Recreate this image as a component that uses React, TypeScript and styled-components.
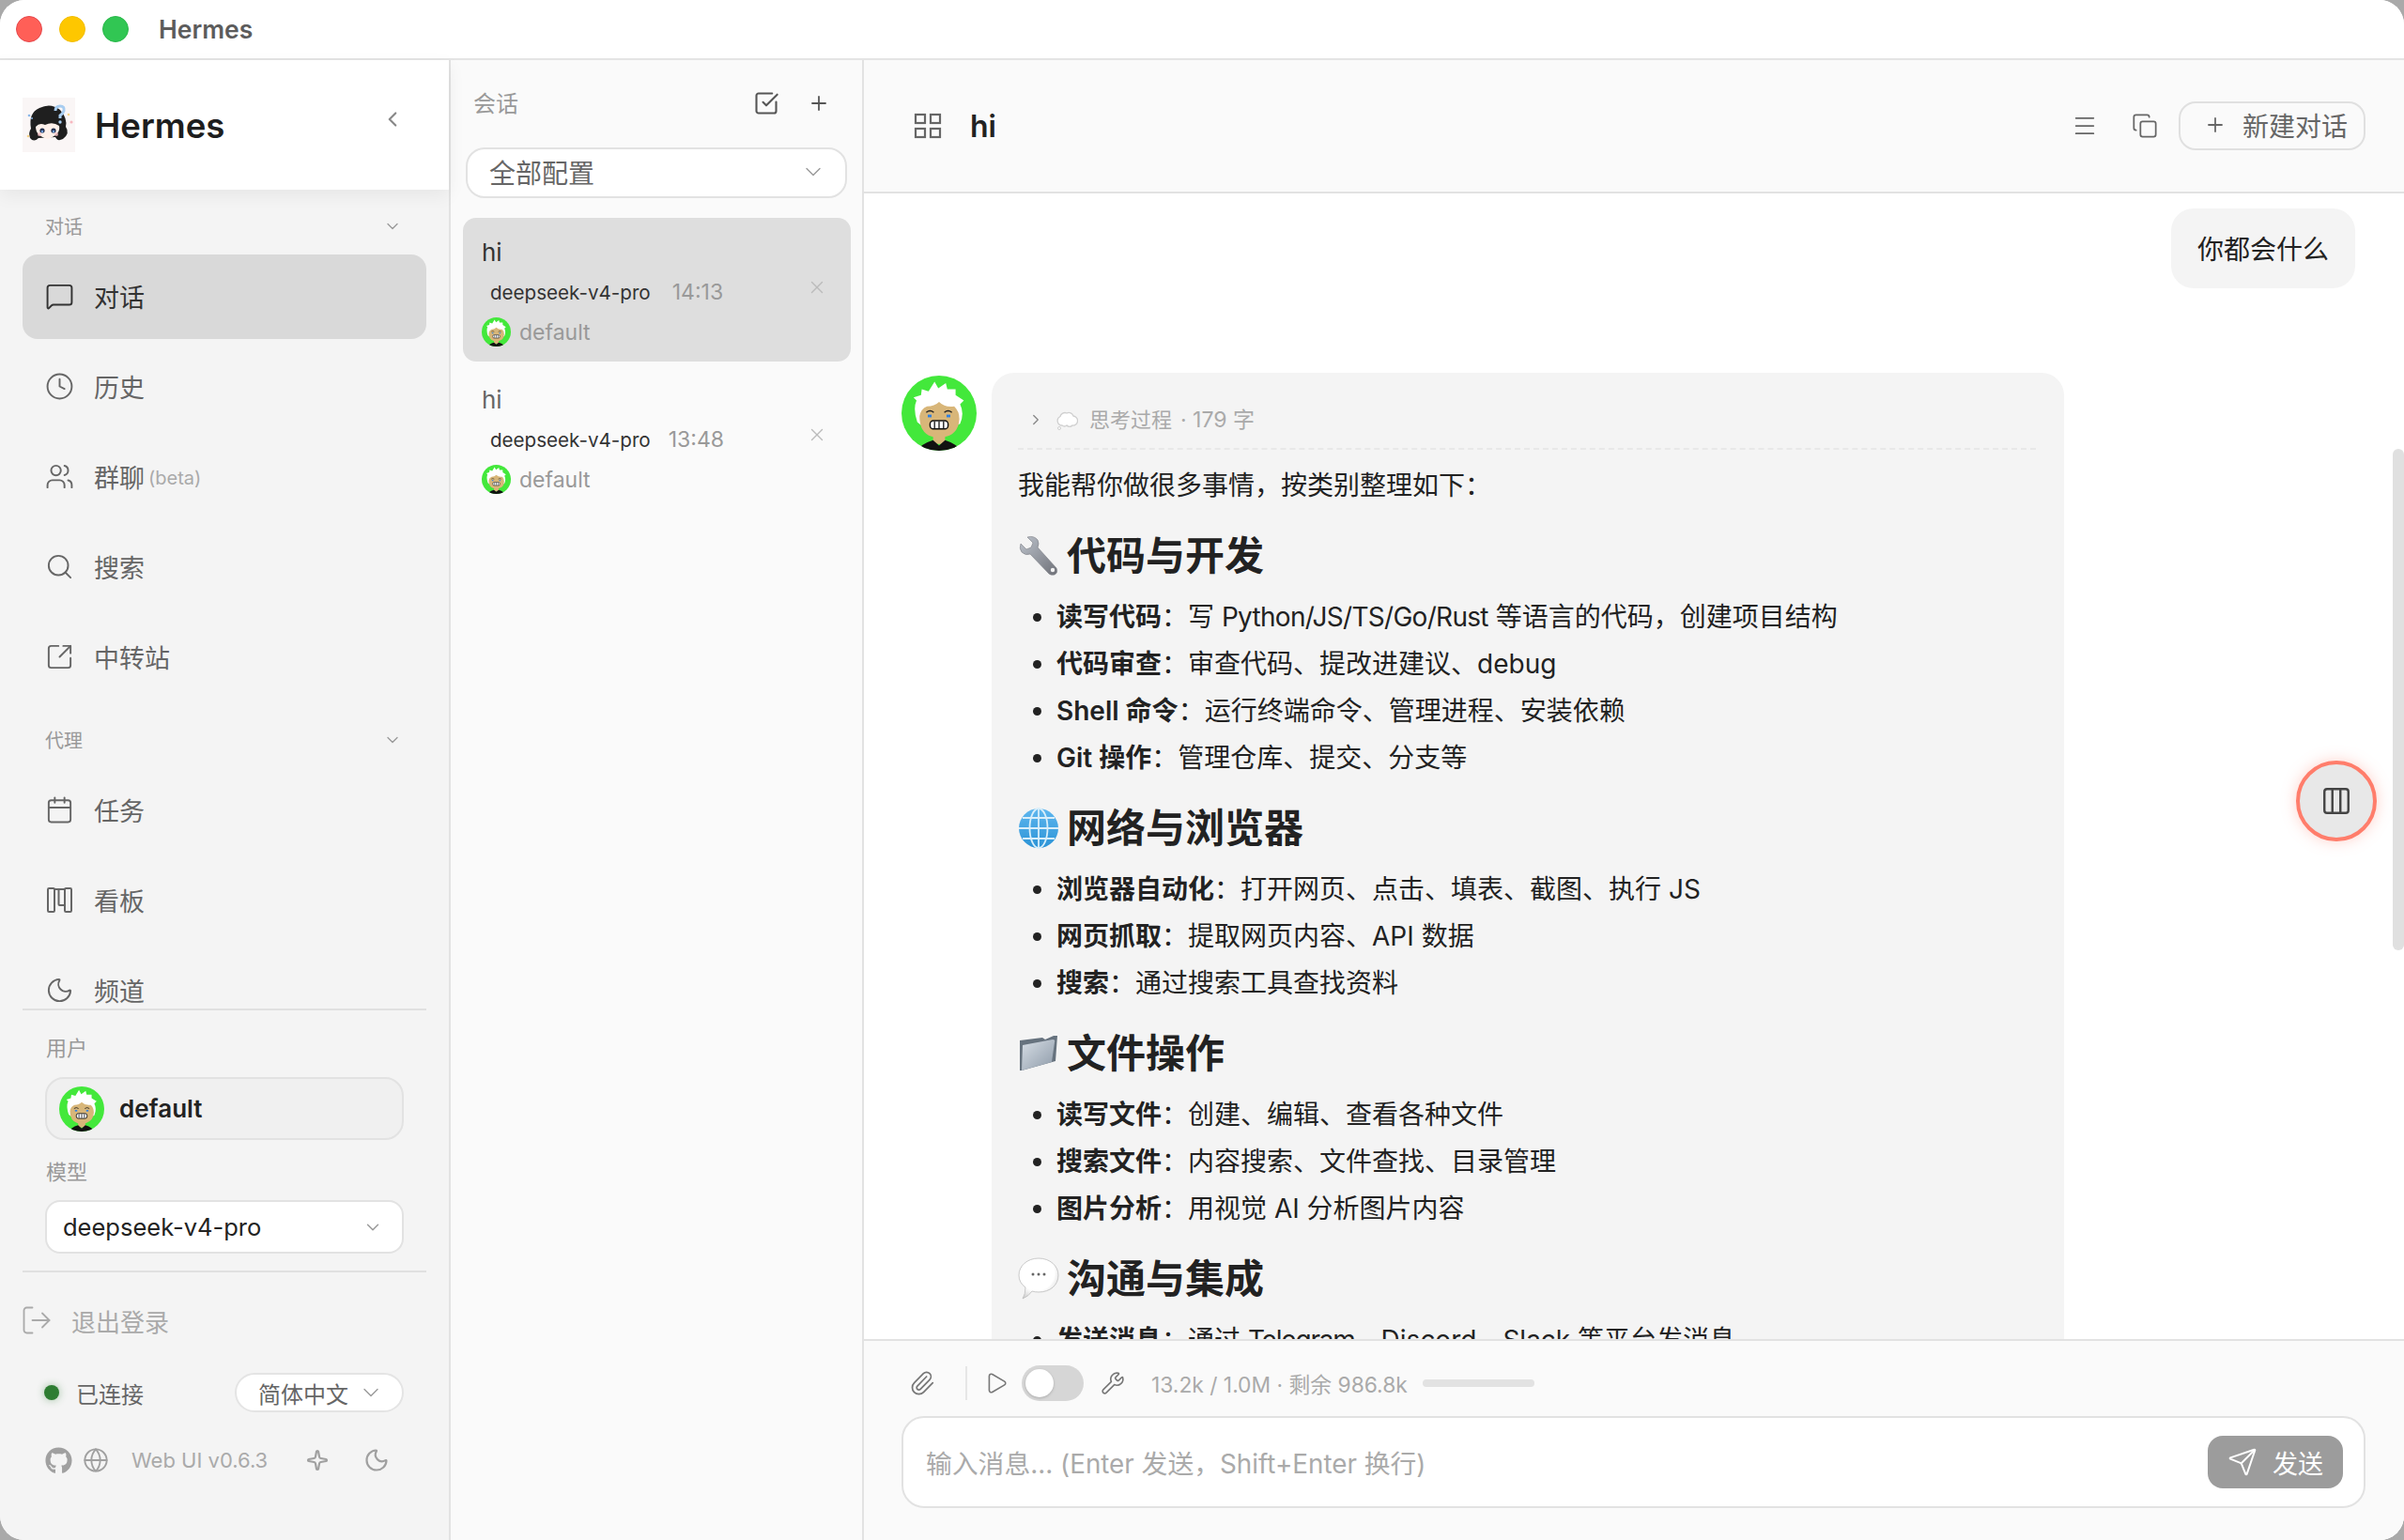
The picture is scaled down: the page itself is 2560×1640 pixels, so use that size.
import React from "react";
import styled, { createGlobalStyle } from "styled-components";
import {
  ChevronDown, ChevronLeft, ChevronRight, Clock, Columns3, Copy, Globe, LogOut, Menu, MessageSquare,
  Moon, Paperclip, Play, Plus, Search, Send, Sparkle, SquareArrowOutUpRight, SquareCheckBig, Users,
  Wrench, X, Calendar,
} from "lucide-react";
import { FaGithub } from "react-icons/fa";

const GlobalStyle = createGlobalStyle`
  html, body { margin: 0; padding: 0; width: 2560px; height: 1640px; overflow: hidden; background: #a9a9a9; }
  * { box-sizing: border-box; }
  body { font-family: Inter, "Noto Sans CJK SC", "Noto Sans", sans-serif; color: #222; }
`;

const AppWindow = styled.div`
  width: 2560px; height: 1640px; border-radius: 26px; overflow: hidden;
  background: #fff; display: flex; flex-direction: column;
`;
const TitleBar = styled.header`
  height: 64px; flex: none; display: flex; align-items: center; padding: 0 0 0 17px;
  background: #fff; border-bottom: 2px solid #e4e4e4;
`;
const Light = styled.span<{ $c: string; $b: string }>`
  width: 28px; height: 28px; border-radius: 50%; margin-right: 18px; background: ${p => p.$c};
  border: 1px solid ${p => p.$b};
`;
const AppTitle = styled.span`
  margin-left: 14px; font-size: 26.500px; font-weight: 600; color: #5c5c5c;
`;
const Body = styled.div`
  flex: 1; display: flex; min-height: 0;
`;

/* sidebar */
const Sidebar = styled.aside`
  width: 480px; flex: none; display: flex; flex-direction: column; background: #f4f4f4;
  border-right: 2px solid #e2e2e2;
`;
const Brand = styled.div`
  height: 138px; flex: none; display: flex; align-items: center; padding: 0 47px 0 24px;
  background: #fff; box-shadow: 0 6px 18px rgba(0,0,0,.06); position: relative; z-index: 1;
`;
const BrandName = styled.span`
  margin-left: 21px; flex: 1; padding-top: 2px; font-size: 36.600px; font-weight: 600; color: #1e1e1e;
`;
const BrandBack = styled.span`
  display: flex; color: #888; margin-top: -12px;
`;
const Nav = styled.nav`
  flex: 1; min-height: 0; overflow: hidden; padding: 26px 24px 0; display: flex; flex-direction: column;
`;
const NavSection = styled.div`
  height: 28px; flex: none; display: flex; align-items: center; justify-content: space-between;
  padding: 0 26px 3px 24px; font-size: 20px; color: #999; margin-bottom: 15px;
`;
const NavItem = styled.div<{ $active?: boolean; $last?: boolean }>`
  height: 90px; flex: none; display: flex; align-items: center; gap: 21px; padding: 0 0 2px 24px;
  border-radius: 16px; font-size: 27px;
  margin-bottom: ${p => (p.$last ? "30px" : "6px")};
  background: ${p => (p.$active ? "#d9d9d9" : "transparent")};
  color: ${p => (p.$active ? "#333" : "#666")};
`;
const Beta = styled.span`
  font-size: 20px; color: #aaa; margin-left: -17px; padding-top: 4px;
`;
const SideFooter = styled.div`
  flex: none; height: 566px; display: flex; flex-direction: column;
`;
const Rule = styled.div<{ $mt?: number }>`
  height: 2px; flex: none; margin: ${p => p.$mt ?? 0}px 24px 0 24px; background: #e0e0e0;
`;
const FieldLabel = styled.div<{ $mt: number }>`
  height: 28px; flex: none; margin: ${p => p.$mt}px 0 0 49px; font-size: 22px; line-height: 28px; color: #999;
`;
const UserBox = styled.div`
  height: 67px; flex: none; margin: 17px 48px 0 48px; display: flex; align-items: center; gap: 16px;
  padding-left: 13px; border: 2px solid #e2e2e2; border-radius: 20px; background: #f0f0f0;
  font-size: 26px; font-weight: 600; color: #222;
`;
const ModelSelect = styled.div`
  height: 57px; flex: none; margin: 16px 48px 0 48px; display: flex; align-items: center;
  justify-content: space-between; padding: 0 20px 0 17px; border: 2px solid #e2e2e2; border-radius: 16px;
  background: #fff; font-size: 25.500px; color: #222;
`;
const Caret = styled.span`
  display: flex; color: #999;
`;
const Logout = styled.div`
  height: 40px; flex: none; margin: 31px 0 0 21px; display: flex; align-items: center; gap: 19px;
  font-size: 26px; color: #aaa;
`;
const StatusRow = styled.div`
  height: 42px; flex: none; margin: 36px 48px 0 47px; display: flex; align-items: center;
  font-size: 24px; color: #666;
`;
const StatusDot = styled.span`
  width: 16px; height: 16px; border-radius: 50%; background: #2e7d32; margin-right: 18px;
  box-shadow: 0 0 8px rgba(46,125,50,.45);
`;
const LangSelect = styled.div`
  margin-left: auto; width: 180px; height: 42px; display: flex; align-items: center; gap: 10px;
  padding-left: 23px; border: 2px solid #e4e4e4; border-radius: 21px; background: #fff; color: #666;
`;
const MetaRow = styled.div`
  height: 40px; flex: none; margin: 31px 48px 0 48px; display: flex; align-items: center; color: #a0a0a0;
`;
const GlobeGap = styled.span`
  display: flex; margin-left: 11px;
`;
const MoonGap = styled.span`
  display: flex; margin-left: 37px;
`;
const Version = styled.span`
  margin-left: 24px; font-size: 22px; color: #aaa; width: 186px;
`;

/* sessions */
const SessionPanel = styled.section`
  width: 440px; flex: none; display: flex; flex-direction: column; background: #fafafa;
  border-right: 2px solid #e2e2e2;
`;
const PanelHead = styled.div`
  height: 92px; flex: none; display: flex; align-items: center; padding: 0 34px 0 24px;
  font-size: 24px; color: #999; gap: 30px;
`;
const PanelTitle = styled.span`
  flex: 1; padding-bottom: 3px;
`;
const HeadIcon = styled.span`
  display: flex; color: #555;
`;
const ProfileSelect = styled.div`
  height: 54px; flex: none; margin: 1px 16px 0 16px; display: flex; align-items: center;
  justify-content: space-between; padding: 0 20px 3px 23px; border: 2px solid #e2e2e2; border-radius: 20px;
  background: #fff; font-size: 28px; color: #666;
`;
const SessionList = styled.div`
  margin: 21px 12px 0 13px; display: flex; flex-direction: column; gap: 4px;
`;
const SessionCard = styled.div<{ $active?: boolean }>`
  height: 153px; padding: 19px 25px 0 20px; border-radius: 14px;
  background: ${p => (p.$active ? "#dedede" : "transparent")};
`;
const SessionTitle = styled.div<{ $active?: boolean }>`
  height: 36px; line-height: 36px; font-size: 26px; color: ${p => (p.$active ? "#333" : "#666")};
`;
const SessionMeta = styled.div`
  height: 36px; margin-top: 6px; padding-left: 9px; display: flex; align-items: center; font-size: 20.600px; color: #333;
`;
const SessionTime = styled.span<{ $gap: number }>`
  margin-left: ${p => p.$gap}px; font-size: 23px; color: #999;
`;
const SessionClose = styled.span`
  display: flex; margin: -10px 0 0 auto; color: #bbb;
`;
const SessionOwner = styled.div`
  height: 31px; margin-top: 9px; display: flex; align-items: center; gap: 9px; font-size: 23px; color: #999;
`;

/* chat */
const Main = styled.main`
  flex: 1; min-width: 0; display: flex; flex-direction: column; position: relative; background: #fff;
`;
const ChatHead = styled.div`
  height: 142px; flex: none; display: flex; align-items: center; padding: 0 41px 0 53px;
  background: #fafafa; border-bottom: 2px solid #e2e2e2;
`;
const ChatTitle = styled.span`
  margin-left: 30px; flex: 1; font-size: 32px; font-weight: 600; color: #222;
`;
const HeadTool = styled.span<{ $mr: number }>`
  display: flex; margin-right: ${p => p.$mr}px; color: #666;
`;
const NewChat = styled.div`
  width: 199px; height: 52px; display: flex; align-items: center; gap: 17px; padding: 0 0 2px 25px;
  border: 2px solid #e0e0e0; border-radius: 18px; font-size: 28px; color: #666;
`;
const Thread = styled.div`
  flex: 1; min-height: 0; overflow: hidden; display: flex; flex-direction: column; padding: 16px 52px 0 40px;
`;
const UserBubble = styled.div`
  align-self: flex-end; flex: none; width: 196px; height: 85px; display: flex; align-items: center; justify-content: center;
  padding-bottom: 2px; background: #f4f4f4; border-radius: 24px; font-size: 28px; color: #222;
`;
const AssistantRow = styled.div`
  flex: none; display: flex; gap: 16px; margin-top: 90px;
`;
const AvatarWrap = styled.div`
  flex: none; margin-top: 3px;
`;
const AssistantBubble = styled.div`
  width: 1142px; flex: none; padding: 29px 30px 40px 28px; background: #f4f4f4; border-radius: 24px;
  font-size: 28px; line-height: 50px; color: #222;
`;
const Thinking = styled.div`
  height: 53px; padding: 0 0 10px 10px; display: flex; align-items: center; gap: 12px; color: #aaa;
  font-size: 22px; border-bottom: 2px dashed #e8e8e8; margin-bottom: 13px;
`;
const ThinkingCount = styled.span`
  margin-left: -3px; font-size: 23px;
`;
const Para = styled.p`
  margin: 0;
`;
const H3 = styled.h3`
  margin: 22px 0 12px; height: 56px; display: flex; align-items: center; gap: 8px;
  font-size: 42px; line-height: 56px; font-weight: 700; color: #222;
`;
const List = styled.ul`
  margin: 0; padding: 0 0 0 41px; list-style: disc;
`;
const Strong = styled.strong`
  font-weight: 600;
`;
const Tight = styled.span<{ $ls: number }>`
  letter-spacing: ${p => p.$ls}px;
`;
const Composer = styled.div`
  height: 214px; flex: none; background: #fafafa; border-top: 2px solid #e2e2e2; padding: 25px 41px 0 40px;
`;
const Toolbar = styled.div`
  height: 40px; display: flex; align-items: center; color: #777;
`;
const ToolIcon = styled.span<{ $ml: number }>`
  display: flex; margin-left: ${p => p.$ml}px; color: #777;
`;
const ToolSep = styled.span`
  width: 2px; height: 36px; margin-left: 32px; background: #e6e6e6;
`;
const Toggle = styled.span`
  width: 66px; height: 38px; margin-left: 14px; padding-left: 4px; border-radius: 19px; background: #d6d6d6;
  display: flex; align-items: center;
`;
const Knob = styled.span`
  width: 30px; height: 30px; border-radius: 50%; background: #fff; box-shadow: 0 1px 3px rgba(0,0,0,.2);
`;
const Usage = styled.span`
  margin-left: 28px; font-size: 22.800px; color: #aaa;
`;
const UsageBar = styled.span`
  width: 119px; height: 8px; margin-left: 16px; border-radius: 4px; background: #e2e2e2;
`;
const InputBox = styled.div`
  margin-top: 15px; height: 98px; display: flex; align-items: center; justify-content: space-between;
  padding: 0 22px 0 24px; background: #fff; border: 2px solid #e2e2e2; border-radius: 24px;
  font-size: 27.800px; color: #aaa;
`;
const SendButton = styled.div`
  width: 144px; height: 56px; display: flex; align-items: center; justify-content: center; gap: 16px;
  border-radius: 16px; background: #9c9c9c; color: #fff; font-size: 27px;
`;
const FloatButton = styled.div`
  position: absolute; top: 746px; right: 29px; width: 86px; height: 86px; border-radius: 50%;
  display: flex; align-items: center; justify-content: center; color: #444;
  background: #e8e8e8; border: 4px solid #ff7d6b; box-shadow: 0 0 16px rgba(255,125,107,.35);
`;
const ScrollThumb = styled.div`
  position: absolute; top: 414px; right: 0; width: 12px; height: 534px; border-radius: 6px; background: #e0e0e0;
`;

const Avatar = ({ size }: { size: number }) => {
  const id = React.useId();
  return (
    <svg width={size} height={size} viewBox="0 0 100 100" style={{ flex: "none", display: "block" }}>
      <defs><clipPath id={id}><circle cx="50" cy="50" r="50" /></clipPath></defs>
      <g clipPath={`url(#${id})`}>
        <rect width="100" height="100" fill="#43e83b" />
        <path d="M21 62 Q15 44 20 33 L16 29 L26 26 L27 18 L36 21 L44 8 L49 17 L59 10 L61 18 L72 18 L72 26 L83 33 L78 38 Q84 50 78 64 L74 66 L26 66 Z" fill="#fff" />
        <rect x="42" y="76" width="16" height="15" fill="#d8b679" />
        <path d="M24 54 Q26 44 34 41 Q44 41 50 35 Q58 43 70 41 Q77 47 77 58 Q76 76 60 81 Q50 84 40 81 Q24 76 24 54 Z" fill="#d8b679" />
        <path d="M33 49 q5 -4 10 0 M57 49 q5 -4 10 0" stroke="#222" strokeWidth="1.800" fill="none" />
        <rect x="35" y="52" width="5" height="3.500" fill="#2f7fe0" /><rect x="60" y="52" width="5" height="3.500" fill="#2f7fe0" />
        <rect x="38" y="60" width="24" height="11" rx="4.500" fill="#fff" stroke="#111" strokeWidth="1.800" />
        <path d="M44 61v9M50 61v9M56 61v9" stroke="#111" strokeWidth="1.600" />
        <path d="M21 100 Q26 91 42 86 L50 93 L58 86 Q74 91 79 100 Z" fill="#111" />
      </g>
    </svg>
  );
};

const Logo = () => (
  <svg width="56" height="58" viewBox="0 0 56 58" style={{ flex: "none" }}>
    <rect width="56" height="58" fill="#faf6f6" />
    <path d="M9 33 Q6 16 18 11 Q30 5 40 13 Q48 22 46 31 Q51 38 43 44 Q37 47 35 42 L17 43 Q12 48 8 43 Q6 37 9 33 Z" fill="#1f1f1f" />
    <path d="M14 31 Q18 26 24 29 Q32 25 39 30 Q41 39 27 44 Q14 41 14 31 Z" fill="#fdf0ea" />
    <circle cx="21" cy="35" r="2.600" fill="#22304f" /><circle cx="33" cy="35" r="2.600" fill="#22304f" />
    <circle cx="21" cy="36" r="1.200" fill="#6f9fe6" /><circle cx="33" cy="36" r="1.200" fill="#6f9fe6" />
    <circle cx="36" cy="39" r="2" fill="#f8c3c8" opacity=".8" /><circle cx="18" cy="39" r="2" fill="#f8c3c8" opacity=".8" />
    <path d="M35 14 q0 -5 5 -5 q5 0 4 5 q-1 3 -4 5 v3" stroke="#a8cdf0" strokeWidth="3" fill="none" />
    <circle cx="40" cy="26" r="1.700" fill="#a8cdf0" />
    <circle cx="7" cy="19" r="1.300" fill="#8ab6e8" /><circle cx="10" cy="22" r="1" fill="#8ab6e8" />
    <circle cx="49" cy="18" r="1.300" fill="#f5d38a" /><circle cx="52" cy="26" r="1.600" fill="#f7b7c0" />
    <circle cx="6" cy="41" r="1.300" fill="#f5d38a" />
  </svg>
);

const GridIcon = () => (
  <svg width="30" height="28" viewBox="0 0 30 28" fill="none" stroke="#666" strokeWidth="2.200">
    <rect x="2" y="2" width="10" height="9" /><rect x="18" y="2" width="10" height="9" />
    <rect x="2" y="17" width="10" height="9" /><rect x="18" y="17" width="10" height="9" />
  </svg>
);
const KanbanIcon = () => (
  <svg width="31" height="31" viewBox="0 0 31 31" fill="none" stroke="currentColor" strokeWidth="2" strokeLinejoin="round" style={{ flex: "none" }}>
    <rect x="3" y="3" width="7" height="25" rx="1.200" />
    <path d="M10 4h11v17h-5.500a1 1 0 0 1-1-1V4" />
    <rect x="21" y="3" width="7" height="25" rx="1.200" />
  </svg>
);
const CloudEmoji = () => (
  <svg width="24" height="24" viewBox="0 0 24 24">
    <path d="M7 18a5 5 0 0 1-2-9.500A5 5 0 0 1 12 5a5 5 0 0 1 7 3 5 5 0 0 1-1 10 4 4 0 0 1-6 0 4 4 0 0 1-5 0Z" fill="#fff" stroke="#cfcfcf" strokeWidth="1.300" />
    <circle cx="4" cy="21" r="1.500" fill="#fff" stroke="#cfcfcf" />
  </svg>
);
const WrenchEmoji = () => (
  <svg width="44" height="44" viewBox="0 0 44 44">
    <defs><linearGradient id="wr" x1="0" y1="0" x2="1" y2="1"><stop offset="0" stopColor="#bcc2cb" /><stop offset="1" stopColor="#6f7178" /></linearGradient></defs>
    <path d="M3 9 L9 15 L14 13 L16 8 L10 2 Q17 0 21 5 Q23 9 21 13 L41 35 Q43 40 39 42 Q35 43 33 41 L13 20 Q8 22 4 18 Q1 14 3 9 Z" fill="url(#wr)" stroke="#7a7c83" strokeWidth=".6" />
    <circle cx="37" cy="37" r="2.200" fill="#f3f3f3" />
  </svg>
);
const GlobeEmoji = () => (
  <svg width="44" height="44" viewBox="0 0 44 44">
    <defs><linearGradient id="gl" x1="0" y1="0" x2="0" y2="1"><stop offset="0" stopColor="#5fb7ef" /><stop offset="1" stopColor="#2b93d6" /></linearGradient></defs>
    <circle cx="22" cy="22" r="21" fill="url(#gl)" />
    <g stroke="#d8eefa" strokeWidth="1.800" fill="none">
      <ellipse cx="22" cy="22" rx="9.500" ry="21" /><path d="M22 1v42M1 22h42M5 11h34M5 33h34" />
    </g>
  </svg>
);
const FolderEmoji = () => (
  <svg width="44" height="44" viewBox="0 0 44 44">
    <defs><linearGradient id="fo" x1="0" y1="0" x2="1" y2="1"><stop offset="0" stopColor="#d7dee6" /><stop offset="1" stopColor="#8d9aa8" /></linearGradient></defs>
    <path d="M2 8 L26 5 L29 7 L38 3 L42 3 L40 30 L4 40 L2 40 Z" fill="#66727e" />
    <path d="M5 13 L37 7 Q40 7 39 10 L36 31 L4 40 Z" fill="url(#fo)" />
  </svg>
);
const BubbleEmoji = () => (
  <svg width="44" height="46" viewBox="0 0 44 46">
    <defs><radialGradient id="bu" cx=".45" cy=".35" r=".75"><stop offset=".6" stopColor="#fff" /><stop offset="1" stopColor="#c4c4c4" /></radialGradient></defs>
    <path d="M22 1 C34 1 43 9 43 19 C43 30 34 37 22 37 Q18 37 15 36 Q12 41 5 44 Q8 39 8 32 Q1 27 1 19 C1 9 10 1 22 1 Z" fill="url(#bu)" stroke="#bdbdbd" strokeWidth=".8" />
    <circle cx="16" cy="18" r="1.500" fill="#666" /><circle cx="22" cy="18" r="1.500" fill="#666" /><circle cx="28" cy="18" r="1.500" fill="#666" />
  </svg>
);

type Item = [string, React.ReactNode];
const sections: { icon: React.ReactNode; title: string; items: Item[] }[] = [
  {
    icon: <WrenchEmoji />, title: "代码与开发", items: [
      ["读写代码", <>写 <Tight $ls={-0.7}>Python/JS/TS/Go/Rust</Tight> 等语言的代码，创建项目结构</>],
      ["代码审查", "审查代码、提改进建议、debug"],
      ["Shell 命令", "运行终端命令、管理进程、安装依赖"],
      ["Git 操作", "管理仓库、提交、分支等"],
    ],
  },
  {
    icon: <GlobeEmoji />, title: "网络与浏览器", items: [
      ["浏览器自动化", "打开网页、点击、填表、截图、执行 JS"],
      ["网页抓取", "提取网页内容、API 数据"],
      ["搜索", "通过搜索工具查找资料"],
    ],
  },
  {
    icon: <FolderEmoji />, title: "文件操作", items: [
      ["读写文件", "创建、编辑、查看各种文件"],
      ["搜索文件", "内容搜索、文件查找、目录管理"],
      ["图片分析", "用视觉 AI 分析图片内容"],
    ],
  },
  {
    icon: <BubbleEmoji />, title: "沟通与集成", items: [
      ["发送消息", <>通过 <Tight $ls={-1.2}>Telegram</Tight>、Discord、Slack 等平台发消息</>],
    ],
  },
];

const sessions = [
  { time: "14:13", gap: 23, active: true },
  { time: "13:48", gap: 19, active: false },
];

const NAV = 31;
const S = 1.5;

export default function App() {
  return (
    <AppWindow>
      <GlobalStyle />
      <TitleBar>
        <Light $c="#ff5f57" $b="#e5484d" /><Light $c="#fec700" $b="#f2bd00" /><Light $c="#31c653" $b="#2ab84a" />
        <AppTitle>Hermes</AppTitle>
      </TitleBar>
      <Body>
        <Sidebar>
          <Brand>
            <Logo /><BrandName>Hermes</BrandName>
            <BrandBack><ChevronLeft size={26} strokeWidth={2} /></BrandBack>
          </Brand>
          <Nav>
            <NavSection>对话<ChevronDown size={20} strokeWidth={1.6} /></NavSection>
            <NavItem $active><MessageSquare size={NAV} strokeWidth={S} />对话</NavItem>
            <NavItem><Clock size={NAV} strokeWidth={S} />历史</NavItem>
            <NavItem><Users size={NAV} strokeWidth={S} />群聊<Beta>(beta)</Beta></NavItem>
            <NavItem><Search size={NAV} strokeWidth={S} />搜索</NavItem>
            <NavItem $last><SquareArrowOutUpRight size={NAV} strokeWidth={S} />中转站</NavItem>
            <NavSection>代理<ChevronDown size={20} strokeWidth={1.6} /></NavSection>
            <NavItem><Calendar size={NAV} strokeWidth={S} />任务</NavItem>
            <NavItem><KanbanIcon />看板</NavItem>
            <NavItem><Moon size={NAV} strokeWidth={S} />频道</NavItem>
          </Nav>
          <SideFooter>
            <Rule />
            <FieldLabel $mt={26}>用户</FieldLabel>
            <UserBox><Avatar size={48} />default</UserBox>
            <FieldLabel $mt={20}>模型</FieldLabel>
            <ModelSelect>deepseek-v4-pro<Caret><ChevronDown size={22} strokeWidth={1.6} /></Caret></ModelSelect>
            <Rule $mt={18} />
            <Logout><LogOut size={36} strokeWidth={1.2} />退出登录</Logout>
            <StatusRow>
              <StatusDot />已连接
              <LangSelect>简体中文<Caret><ChevronDown size={28} strokeWidth={1.2} /></Caret></LangSelect>
            </StatusRow>
            <MetaRow>
              <FaGithub size={29} />
              <GlobeGap><Globe size={28} strokeWidth={1.6} /></GlobeGap>
              <Version>Web UI v0.6.3</Version>
              <Sparkle size={24} strokeWidth={2.2} />
              <MoonGap><Moon size={28} strokeWidth={1.9} /></MoonGap>
            </MetaRow>
          </SideFooter>
        </Sidebar>

        <SessionPanel>
          <PanelHead>
            <PanelTitle>会话</PanelTitle>
            <HeadIcon><SquareCheckBig size={28} strokeWidth={1.8} /></HeadIcon>
            <HeadIcon><Plus size={24} strokeWidth={1.8} /></HeadIcon>
          </PanelHead>
          <ProfileSelect>全部配置<Caret><ChevronDown size={28} strokeWidth={1.2} /></Caret></ProfileSelect>
          <SessionList>
            {sessions.map(s => (
              <SessionCard key={s.time} $active={s.active}>
                <SessionTitle $active={s.active}>hi</SessionTitle>
                <SessionMeta>
                  deepseek-v4-pro
                  <SessionTime $gap={s.gap}>{s.time}</SessionTime>
                  <SessionClose><X size={22} strokeWidth={1.5} /></SessionClose>
                </SessionMeta>
                <SessionOwner><Avatar size={31} />default</SessionOwner>
              </SessionCard>
            ))}
          </SessionList>
        </SessionPanel>

        <Main>
          <ChatHead>
            <GridIcon />
            <ChatTitle>hi</ChatTitle>
            <HeadTool $mr={36}><Menu size={28} strokeWidth={1.5} /></HeadTool>
            <HeadTool $mr={22}><Copy size={28} strokeWidth={1.5} /></HeadTool>
            <NewChat><Plus size={24} strokeWidth={1.8} />新建对话</NewChat>
          </ChatHead>
          <Thread>
            <UserBubble>你都会什么</UserBubble>
            <AssistantRow>
              <AvatarWrap><Avatar size={80} /></AvatarWrap>
              <AssistantBubble>
                <Thinking>
                  <ChevronRight size={18} strokeWidth={1.8} color="#888" />
                  <CloudEmoji />
                  <span>思考过程</span>
                  <ThinkingCount>· 179 字</ThinkingCount>
                </Thinking>
                <Para>我能帮你做很多事情，按类别整理如下：</Para>
                {sections.map(sec => (
                  <React.Fragment key={sec.title}>
                    <H3>{sec.icon}<span>{sec.title}</span></H3>
                    <List>
                      {sec.items.map(([k, v]) => <li key={k}><Strong>{k}</Strong>：{v}</li>)}
                    </List>
                  </React.Fragment>
                ))}
              </AssistantBubble>
            </AssistantRow>
          </Thread>
          <Composer>
            <Toolbar>
              <ToolIcon $ml={8}><Paperclip size={28} strokeWidth={1.5} /></ToolIcon>
              <ToolSep />
              <ToolIcon $ml={18}><Play size={26} strokeWidth={1.5} /></ToolIcon>
              <Toggle><Knob /></Toggle>
              <ToolIcon $ml={18}><Wrench size={26} strokeWidth={1.5} /></ToolIcon>
              <Usage>13.2k / 1.0M · 剩余 986.8k</Usage>
              <UsageBar />
            </Toolbar>
            <InputBox>
              输入消息... (Enter 发送，Shift+Enter 换行)
              <SendButton><Send size={32} strokeWidth={1.5} />发送</SendButton>
            </InputBox>
          </Composer>
          <FloatButton><Columns3 size={34} strokeWidth={1.7} /></FloatButton>
          <ScrollThumb />
        </Main>
      </Body>
    </AppWindow>
  );
}
